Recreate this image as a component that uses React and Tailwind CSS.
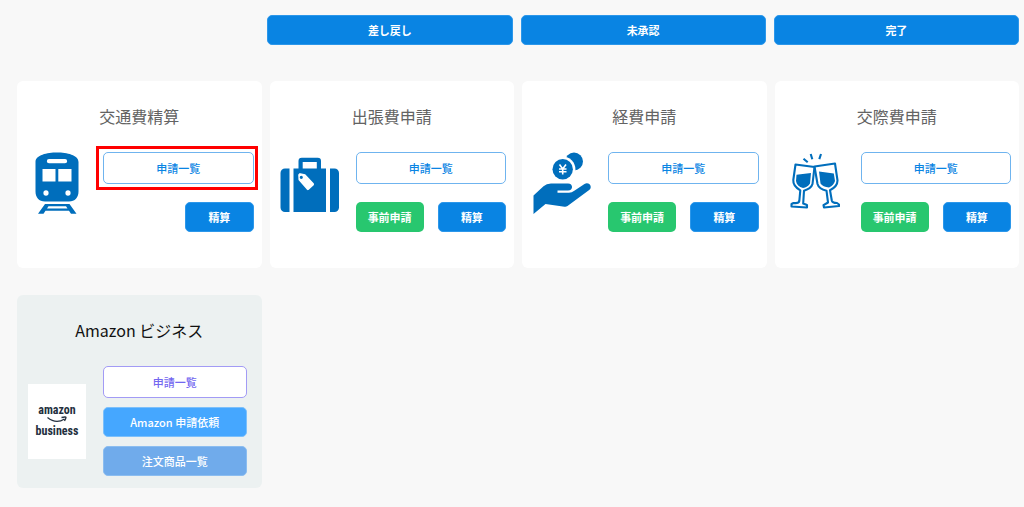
import clsx from "clsx";

const TrainIcon = () => (
  <svg viewBox="0 0 44 62" className="w-[44px] h-[62px] text-[#006ebc]" fill="currentColor" aria-hidden="true">
    <path
      fillRule="evenodd"
      d="M0.5 10C0.5 3 12 0.5 22 0.5S43.500 3 43.500 10V39.500C43.500 45.500 40 49.500 34 49.500H10C4 49.500 0.5 45.500 0.5 39.500ZM14 7A2 2 0 0 0 14 11.300H30A2 2 0 0 0 30 7ZM7.500 17V29.500H20.500V17ZM23.300 17V29.500H36.500V17ZM11 38.300A2.600 2.700 0 1 0 11 43.700A2.600 2.700 0 1 0 11 38.300ZM33 38.300A2.600 2.700 0 1 0 33 43.700A2.600 2.700 0 1 0 33 38.300Z"
    />
    <path fillRule="evenodd" d="M10 52H34.500L41.500 61.700H36L34 58.700H10.500L8.500 61.700H3ZM13.500 54.200L12 56.500H32.500L31 54.200Z" />
  </svg>
);

const SuitcaseIcon = () => (
  <svg viewBox="0 -5 60 62" className="w-[60px] h-[62px] text-[#006ebc]" fill="currentColor" aria-hidden="true">
    <path d="M9.500 11.500V55H5A4.500 4.500 0 0 1 0.5 50.500V16A4.500 4.500 0 0 1 5 11.500ZM50 11.500V55H54.500A4.500 4.500 0 0 0 59 50.500V16A4.500 4.500 0 0 0 54.500 11.500Z" />
    <path
      fillRule="evenodd"
      d="M18.500 11.500V4A3.300 3.300 0 0 1 21.800 0.700H37.700A3.300 3.300 0 0 1 41 4V11.500H46V55H13.500V11.500ZM22.700 4.900V11.500H36.800V4.900ZM19.300 16.300L18.200 17.700L18.500 23L27 32.700Q27.800 33.600 28.800 32.800L33.700 28.200Q34.500 27.300 33.700 26.300L25.200 17.200L20.500 16.200ZM21.300 18.700A1.600 1.600 0 1 1 21.300 21.900A1.600 1.600 0 1 1 21.300 18.700Z"
    />
  </svg>
);

const MoneyIcon = () => (
  <svg viewBox="0 0 60 62" className="w-[60px] h-[62px] text-[#006ebc]" aria-hidden="true">
    <circle cx="42" cy="9.500" r="9" fill="currentColor" />
    <circle cx="30.700" cy="17.200" r="12.700" fill="#fff" />
    <circle cx="30.700" cy="17.200" r="10.200" fill="currentColor" />
    <path
      d="M27.500 12.500L30.700 17L34 12.500M30.700 17V22.500M27 17H34.500M27 19.700H34.500"
      fill="none"
      stroke="#fff"
      strokeWidth="1.600"
    />
    <path
      fill="currentColor"
      d="M1.500 62V43.500L11.500 34.200Q14.500 31.500 19 31.500H36C41.500 31.500 41.300 38.500 36 38.500H25.500V40.800H37Q39.800 40.800 42.300 38.800L52.500 32C56.500 29.500 61 34.300 57.500 37.800L35.500 54Q34 55 32.500 54.700L13.500 52Z"
    />
  </svg>
);

const GlassesIcon = () => (
  <svg viewBox="0 -1 50 62" className="w-[50px] h-[62px] text-[#006ebc]" aria-hidden="true">
    <g fill="none" stroke="currentColor" strokeWidth="2.100" strokeLinejoin="round">
      <path d="M5.500 11.500L24.500 14L22.500 31C21.500 34.500 18 36.500 14 37.700L13.200 50.500L17 52V54.500L1.500 53.500V51L3.500 50Q9 50.500 9.300 48L10.300 37.300C5.500 34.500 3 31 3.300 27Z" />
      <path d="M24.500 13.500L45 10.500L47.500 27.500C47.500 31.500 44.500 35 40 37.200L41.800 47.500Q42.300 50 47 50L49 51.500V53L34 54.500L33.500 52.200L38 49.500L36.500 37.700C31.500 36.500 28.500 34.500 27.500 31Z" />
      <path d="M13.500 5.700L17.700 9.300M20.700 1L22.300 6.200M31 1L29.300 6.200" />
    </g>
    <path fill="currentColor" d="M6.500 21.800L21 20L20 30.500C18.500 33 16 34.500 13 35C9 34 6.500 31.500 6 28ZM29 18.500L43.800 20.500L45 28C44 31 42.500 33 39 34.500C35 34 32 33 30.500 30.500Z" />
  </svg>
);

const AmazonLogo = () => (
  <div className="flex h-[75px] w-[58px] flex-col items-center justify-center bg-white font-['Roboto_Condensed','Noto_Sans_CJK_JP',sans-serif] text-xs font-bold text-[#232f3e]">
    <span className="leading-3">amazon</span>
    <svg viewBox="0 0 20 7" className="h-[7px] w-[20px]" fill="none" stroke="currentColor" strokeWidth="1.300" aria-hidden="true">
      <path d="M0.5 1.500Q9 8.500 17.500 3M14.500 1.500Q19 0.500 19 1.500T17.500 5" />
    </svg>
    <span className="leading-4">business</span>
  </div>
);

const variants = {
  outline: "h-8 border border-[#6fb4ef] bg-white font-medium text-[#0984e3]",
  primary: "h-[30px] border border-[#2c97ea] bg-[#0984e3] font-bold text-white",
  status: "h-[30px] border border-[#2c97ea] bg-[#0984e3] font-bold text-white",
  success: "h-[30px] bg-[#28c76f] font-bold text-white",
  violet: "h-8 border border-[#a29bf5] bg-white font-medium text-[#7367f0]",
  sky: "h-[30px] border border-[#7cc0fb] bg-[#45a7ff] font-medium text-white",
  soft: "h-[30px] border border-[#8bbdf0] bg-[#70abeb] font-medium text-white",
};

function Button({ variant, className, children }) {
  return (
    <button type="button" className={clsx("rounded-[5px] text-[11px] leading-4", variants[variant], className)}>
      {children}
    </button>
  );
}

const statuses = ["差し戻し", "未承認", "完了"];

const categories = [
  { title: "交通費精算", Icon: TrainIcon, highlighted: true },
  { title: "出張費申請", Icon: SuitcaseIcon, preApply: true },
  { title: "経費申請", Icon: MoneyIcon, preApply: true },
  { title: "交際費申請", Icon: GlassesIcon, preApply: true },
];

function CategoryCard({ title, Icon, preApply, highlighted }) {
  return (
    <section className="rounded-md bg-white pt-[23px] pr-2 pb-9">
      <h2 className="pl-2 text-center text-base leading-6 text-[#636363]">{title}</h2>
      <div className="mt-6 flex gap-[6px]">
        <div className="flex h-[62px] w-20 shrink-0 justify-center items-center">
          <Icon />
        </div>
        <div className="flex-1">
          <div className="relative flex">
            <Button variant="outline" className="w-full">申請一覧</Button>
            {highlighted && (
              <span className="pointer-events-none absolute -inset-y-[6px] -left-[7px] -right-1 border-3 border-[#ff0000]" />
            )}
          </div>
          <div className="mt-[18px] grid grid-cols-2 gap-[14px]">
            {preApply && <Button variant="success">事前申請</Button>}
            <Button variant="primary" className="col-start-2">精算</Button>
          </div>
        </div>
      </div>
    </section>
  );
}

function AmazonCard() {
  return (
    <section className="rounded-md bg-[#ecf1f1] pt-[23px] pr-[15px] pb-3">
      <h2 className="pl-[15px] text-center text-base leading-6 text-[#111]">Amazon ビジネス</h2>
      <div className="mt-6 flex gap-[6px]">
        <div className="flex w-20 shrink-0 items-center justify-center">
          <AmazonLogo />
        </div>
        <div className="flex flex-1 flex-col gap-[9px]">
          <Button variant="violet">申請一覧</Button>
          <Button variant="sky">Amazon 申請依頼</Button>
          <Button variant="soft">注文商品一覧</Button>
        </div>
      </div>
    </section>
  );
}

export default function App() {
  return (
    <main className="min-h-screen bg-[#f8f8f8] pt-[15px] pr-[5px] pb-4 pl-[14px] font-['Noto_Sans_CJK_JP',sans-serif]">
      <div className="grid grid-cols-4 gap-2">
        {statuses.map((label, i) => (
          <Button key={label} variant="status" className={i === 0 && "col-start-2"}>
            {label}
          </Button>
        ))}
      </div>
      <div className="mt-9 grid grid-cols-4 gap-x-2 gap-y-[27px] pl-[3px]">
        {categories.map((category) => (
          <CategoryCard key={category.title} {...category} />
        ))}
        <AmazonCard />
      </div>
    </main>
  );
}
